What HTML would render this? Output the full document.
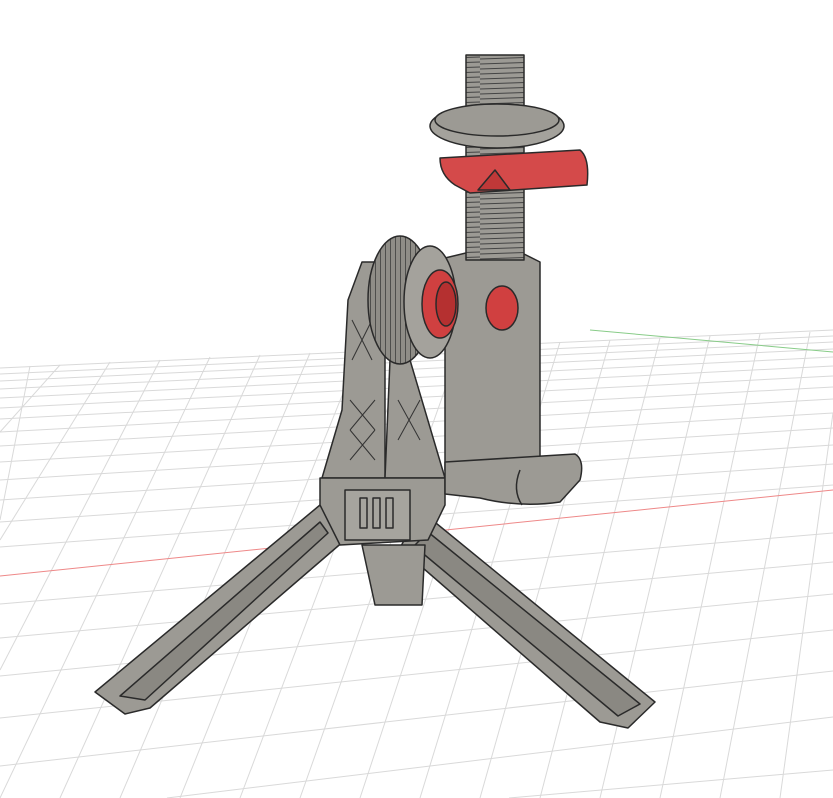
<!DOCTYPE html>
<html><head><meta charset="utf-8"><style>
html,body{margin:0;padding:0;background:#fff;width:833px;height:798px;overflow:hidden}
svg{display:block;overflow:hidden}
</style></head><body>
<svg width="833" height="798" viewBox="0 0 833 798" xmlns="http://www.w3.org/2000/svg">
<defs>
<pattern id="thread" width="60" height="5" patternUnits="userSpaceOnUse">
<rect width="60" height="5" fill="#9c9a94"/><line x1="0" y1="4" x2="60" y2="2" stroke="#444" stroke-width="1"/>
</pattern>
<pattern id="knurl" width="5" height="10" patternUnits="userSpaceOnUse">
<rect width="5" height="10" fill="#8f8d87"/><line x1="0" y1="0" x2="0" y2="10" stroke="#333" stroke-width="1.4"/>
</pattern>
</defs>
<rect width="833" height="798" fill="#fff"/>
<g stroke="#d9d9d9" stroke-width="1" fill="none">
<line x1="0" y1="368" x2="833" y2="330"/><line x1="0" y1="374" x2="833" y2="336"/><line x1="0" y1="381" x2="833" y2="342"/>
<line x1="0" y1="389" x2="833" y2="349"/><line x1="0" y1="398" x2="833" y2="357"/><line x1="0" y1="408" x2="833" y2="366"/>
<line x1="0" y1="419" x2="833" y2="376"/><line x1="0" y1="432" x2="833" y2="387"/><line x1="0" y1="446" x2="833" y2="399"/>
<line x1="0" y1="462" x2="833" y2="413"/><line x1="0" y1="480" x2="833" y2="428"/><line x1="0" y1="500" x2="833" y2="445"/>
<line x1="0" y1="522" x2="833" y2="464"/><line x1="0" y1="547" x2="833" y2="485"/><line x1="0" y1="604" x2="833" y2="533"/>
<line x1="0" y1="638" x2="833" y2="562"/><line x1="0" y1="676" x2="833" y2="594"/><line x1="0" y1="718" x2="833" y2="630"/>
<line x1="0" y1="766" x2="833" y2="671"/><line x1="167" y1="798" x2="833" y2="717"/><line x1="509" y1="798" x2="833" y2="770"/>
<line x1="0" y1="798" x2="210" y2="357"/><line x1="60" y1="798" x2="260" y2="355"/><line x1="120" y1="798" x2="310" y2="353"/>
<line x1="180" y1="798" x2="360" y2="351"/><line x1="240" y1="798" x2="410" y2="349"/><line x1="300" y1="798" x2="460" y2="347"/>
<line x1="360" y1="798" x2="510" y2="344"/><line x1="420" y1="798" x2="560" y2="342"/><line x1="480" y1="798" x2="610" y2="340"/>
<line x1="540" y1="798" x2="660" y2="338"/><line x1="600" y1="798" x2="710" y2="336"/><line x1="660" y1="798" x2="760" y2="334"/>
<line x1="720" y1="798" x2="810" y2="332"/><line x1="780" y1="798" x2="833" y2="413"/>
<line x1="0" y1="432" x2="60" y2="365"/><line x1="0" y1="540" x2="110" y2="362"/><line x1="0" y1="670" x2="160" y2="360"/>
<line x1="0" y1="520" x2="30" y2="366"/>
</g>
<line x1="0" y1="576" x2="833" y2="490" stroke="#e88" stroke-width="1"/>
<line x1="590" y1="330" x2="833" y2="352" stroke="#8c8" stroke-width="1"/>

<g stroke="#2a2a2a" stroke-width="1.5" stroke-linejoin="round" fill="#9c9a94">
<polygon points="95,692 320,505 345,540 150,708 125,714"/>
<polygon points="120,696 320,522 328,533 145,700" fill="#8a8882"/>
<polygon points="420,510 655,702 628,728 600,722 400,548"/>
<polygon points="428,532 640,704 618,716 414,546" fill="#8a8882"/>
<polygon points="362,545 425,545 422,605 375,605"/>
<polygon points="322,478 342,410 348,300 362,262 385,262 385,478"/>
<polygon points="385,478 390,360 410,360 445,478"/>
<g stroke="#333" stroke-width="1" fill="none">
<path d="M350 400 L375 430 M375 400 L350 430 M350 430 L375 460 M375 430 L350 460 M398 400 L420 440 M420 400 L398 440 M352 320 L372 360 M372 320 L352 360"/>
</g>
<polygon points="320,478 445,478 445,505 428,540 340,545 320,505"/>
<polygon points="345,490 410,490 410,540 345,540" fill="#a6a49e"/>
<rect x="360" y="498" width="7" height="30" fill="none"/><rect x="373" y="498" width="7" height="30" fill="none"/><rect x="386" y="498" width="7" height="30" fill="none"/>
<polygon points="445,258 470,252 520,252 540,262 540,470 445,470"/>
<path d="M445 462 L575 454 Q585 460 580 480 L560 502 Q520 508 480 498 L445 494 Z"/>
<path d="M520 470 Q512 490 522 505" fill="none"/>
<ellipse cx="400" cy="300" rx="32" ry="64" fill="url(#knurl)"/>
<ellipse cx="430" cy="302" rx="26" ry="56" fill="#a4a29c"/>
<ellipse cx="440" cy="304" rx="18" ry="34" fill="#d04040"/>
<ellipse cx="446" cy="304" rx="10" ry="22" fill="#b53030"/>
<ellipse cx="502" cy="308" rx="16" ry="22" fill="#d04040"/>
<rect x="466" y="55" width="58" height="205" fill="url(#thread)"/>
<ellipse cx="497" cy="126" rx="67" ry="22" fill="#a4a29c"/>
<ellipse cx="497" cy="120" rx="62" ry="16" fill="#9c9a94"/>
<path d="M440 158 L580 150 Q590 158 587 185 L470 193 L455 185 Q440 175 440 158 Z" fill="#d44a4a"/>
<polygon points="478,190 495,170 510,190" fill="#c03838"/>
</g>
</svg>
</body></html>
